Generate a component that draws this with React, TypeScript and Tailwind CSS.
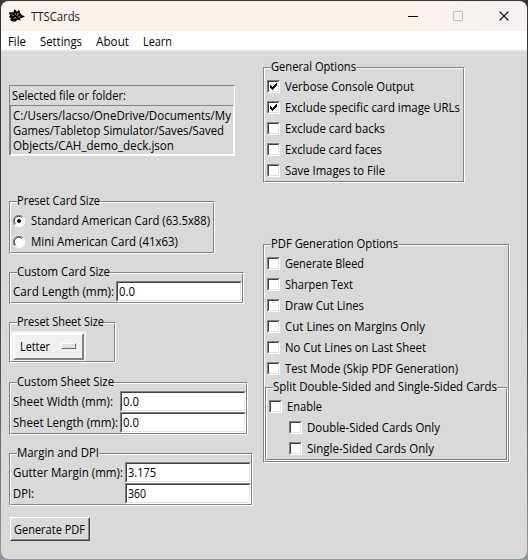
import { useLayoutEffect, useRef, type ReactNode } from 'react';

/** Single line of text condensed or widened to an exact pixel width. */
function Fit({ w, children, className = '' }: { w: number; children: string; className?: string }) {
  const outer = useRef<HTMLSpanElement>(null);
  const inner = useRef<HTMLSpanElement>(null);
  useLayoutEffect(() => {
    if (!outer.current || !inner.current) return;
    outer.current.style.width = w + 'px';
    inner.current.style.transform = 'none';
    inner.current.style.transform = `scaleX(${w / inner.current.getBoundingClientRect().width})`;
  }, [w, children]);
  return (
    <span ref={outer} className={`block shrink-0 ${className}`}>
      <span ref={inner} className="inline-block origin-left whitespace-nowrap align-top">
        {children}
      </span>
    </span>
  );
}

function Group({ title, tw, className, children }: { title: string; tw: number; className: string; children: ReactNode }) {
  return (
    <fieldset className={`relative shrink-0 border border-t-[#828282] border-l-[#828282] border-r-white border-b-white ${className}`}>
      <div className="h-full border border-t-white border-l-white border-r-[#828282] border-b-[#828282] pt-[7px]">{children}</div>
      <div className="absolute -top-[9px] left-[7px] bg-[#d9d9d9] leading-4">
        <Fit w={tw}>{title}</Fit>
      </div>
    </fieldset>
  );
}

function Check({ label, w, on = false, className = 'pl-[2px]' }: { label: string; w: number; on?: boolean; className?: string }) {
  return (
    <label className={`flex h-[21px] items-center ${className}`}>
      <span className="block size-[13px] shrink-0 border border-t-[#828282] border-l-[#828282] border-r-white border-b-white">
        <span className="block size-[11px] border border-t-[#404040] border-l-[#404040] border-r-[#e0e0e0] border-b-[#e0e0e0] bg-white">
          {on && (
            <svg viewBox="0 0 9 9" className="block size-[9px]" shapeRendering="crispEdges">
              <path d="M1 3h1v3H1zM2 4h1v3H2zM3 5h1v3H3zM4 4h1v3H4zM5 3h1v3H5zM6 2h1v3H6zM7 1h1v3H7z" fill="#000" />
            </svg>
          )}
        </span>
      </span>
      <Fit w={w} className="ml-[5px]">{label}</Fit>
    </label>
  );
}

function Radio({ label, w, on = false }: { label: string; w: number; on?: boolean }) {
  return (
    <label className="flex h-[21px] items-center pl-[2px]">
      <svg viewBox="0 0 12 12" className="block size-3 shrink-0">
        <circle cx="6" cy="6" r="5" fill="#fff" />
        <path d="M1.9 10.1A5.5 5.5 0 0 1 10.1 1.9" fill="none" stroke="#828282" />
        <path d="M10.1 1.9A5.5 5.5 0 0 1 1.9 10.1" fill="none" stroke="#fff" />
        <path d="M2.6 9A4.5 4.5 0 0 1 9 2.6" fill="none" stroke="#404040" />
        {on && <circle cx="6" cy="6" r="2" fill="#000" />}
      </svg>
      <Fit w={w} className="ml-[6px]">{label}</Fit>
    </label>
  );
}

function Entry({ label, lw, gap, value, vw }: { label: string; lw: number; gap: string; value: string; vw: number }) {
  return (
    <div className="flex h-[21px] items-center pl-[2px]">
      <Fit w={lw}>{label}</Fit>
      <div className={`h-[21px] w-[126px] border border-t-[#828282] border-l-[#828282] border-r-white border-b-white ${gap}`}>
        <div className="flex h-full items-center border border-t-[#404040] border-l-[#404040] border-r-[#e3e3e3] border-b-[#e3e3e3] bg-white pl-px">
          <Fit w={vw}>{value}</Fit>
        </div>
      </div>
    </div>
  );
}

export default function App() {
  return (
    <div className="h-[560px] w-[528px] overflow-hidden bg-gradient-to-b from-[#37363b] from-50% to-[#8f979f] px-px pt-px font-['Open_Sans','Noto_Sans',sans-serif] text-[12px] leading-[15px] text-black">
      <div className="flex h-[558px] w-[526px] flex-col overflow-hidden rounded-[8px] bg-[#d9d9d9]">
        <header className="flex h-[30px] shrink-0 items-center bg-gradient-to-r from-[#f9f1ec] from-80% to-[#f4f1f1] pl-[8px]">
          <svg viewBox="0 0 16 14" className="h-[14px] w-4" >
            <path d="M5.5 0.2L7.2 1.6 8 3 9.8 1 11 2.2 10.6 4 12 4.6 12.6 6 16 7.2 13 9 10.8 9.6 11.6 11.4 8.4 10.8 6.6 12.6 3 12.4 1.2 10.4 2.2 9.4 0 8 1 6.6 0 3.4 2.6 3.2 4.4 3.6z" fill="#000" />
            <path d="M2.4 5.2l2.4 1.6M6.2 4.2l.6 1.8M9.4 4l-1.6 2.8M4.6 9.4l2.4-.8M9.2 8.2l2-.6" stroke="#f9f1ec" strokeWidth="0.7" fill="none" />
          </svg>
          <Fit w={49} className="ml-[6px] text-[#1c1a1a]">TTSCards</Fit>
          <svg viewBox="0 0 102 11" className="ml-[328px] h-[11px] w-[102px]" fill="none">
            <path d="M0 5.5h10" stroke="#000" />
            <rect x="45.5" y="0.5" width="9" height="9" rx="0.5" stroke="#c6c0bd" />
            <path d="M91.5 0.5l9 9M100.5 0.5l-9 9" stroke="#111" strokeWidth="1.1" />
          </svg>
        </header>
        <nav className="flex h-[20px] shrink-0 items-center gap-[14px] border-b-2 border-[#f0f0f0] bg-white pt-[2px] pl-[7px]">
          <Fit w={18}>File</Fit>
          <Fit w={42}>Settings</Fit>
          <Fit w={33}>About</Fit>
          <Fit w={29}>Learn</Fit>
        </nav>
        <main className="flex flex-1">
          <section className="flex w-[254px] shrink-0 flex-col items-start pt-[34px] pl-[8px]">
            <div className="h-[71px] w-[226px] border border-t-[#828282] border-l-[#828282] border-r-white border-b-white">
              <div className="flex h-[19px] items-center pl-[2px]">
                <Fit w={114}>Selected file or folder:</Fit>
              </div>
              <div className="h-[50px] border border-t-[#828282] border-l-[#828282] border-r-white border-b-white pt-[2px] pl-[2px]">
                <Fit w={218}>C:/Users/lacso/OneDrive/Documents/My</Fit>
                <Fit w={211}>Games/Tabletop Simulator/Saves/Saved</Fit>
                <Fit w={161}>Objects/CAH_demo_deck.json</Fit>
              </div>
            </div>
            <Group title="Preset Card Size" tw={83} className="mt-[45px] h-[53px] w-[206px]">
              <Radio on label="Standard American Card (63.5x88)" w={179} />
              <Radio label="Mini American Card (41x63)" w={147} />
            </Group>
            <Group title="Custom Card Size" tw={93} className="mt-[18px] h-[32px] w-[234px]">
              <Entry label="Card Length (mm):" lw={101} gap="ml-[2px]" value="0.0" vw={16} />
            </Group>
            <Group title="Preset Sheet Size" tw={87} className="mt-[18px] h-[41px] w-[107px]">
              <div className="h-[30px] w-[75px] bg-[#f0f0f0] p-[2px] pb-0">
                <div className="flex h-[27px] w-[71px] items-center border-2 border-t-white border-l-white border-r-[#828282] border-b-[#828282] pl-[5px]">
                  <Fit w={30}>Letter</Fit>
                  <div className="-mt-[2px] ml-[11px] h-[6px] w-[15px] border border-t-white border-l-white border-r-[#696969] border-b-[#696969] bg-[#e3e3e3]" />
                </div>
              </div>
            </Group>
            <Group title="Custom Sheet Size" tw={97} className="mt-[19px] h-[53px] w-[239px]">
              <Entry label="Sheet Width (mm):" lw={100} gap="ml-[7px]" value="0.0" vw={16} />
              <Entry label="Sheet Length (mm):" lw={105} gap="ml-[2px]" value="0.0" vw={16} />
            </Group>
            <Group title="Margin and DPI" tw={82} className="mt-[18px] h-[53px] w-[244px]">
              <Entry label="Gutter Margin (mm):" lw={110} gap="ml-[2px]" value="3.175" vw={28} />
              <Entry label="DPI:" lw={21} gap="ml-[91px]" value="360" vw={18} />
            </Group>
            <button className="mt-[11px] ml-px h-[24px] w-[80px] border border-t-white border-l-white border-r-[#404040] border-b-[#404040]">
              <span className="flex h-full items-center border border-t-[#e3e3e3] border-l-[#e3e3e3] border-r-[#828282] border-b-[#828282] pl-[2px]">
                <Fit w={71}>Generate PDF</Fit>
              </span>
            </button>
          </section>
          <section className="flex flex-col items-start pt-[16px] pl-[8px]">
            <Group title="General Options" tw={85} className="h-[116px] w-[202px]">
              <Check on label="Verbose Console Output" w={129} />
              <Check on label="Exclude specific card image URLs" w={175} />
              <Check label="Exclude card backs" w={100} />
              <Check label="Exclude card faces" w={97} />
              <Check label="Save Images to File" w={100} />
            </Group>
            <Group title="PDF Generation Options" tw={127} className="mt-[61px] h-[219px] w-[247px]">
              <Check label="Generate Bleed" w={79} />
              <Check label="Sharpen Text" w={68} />
              <Check label="Draw Cut Lines" w={79} />
              <Check label="Cut Lines on Margins Only" w={140} />
              <Check label="No Cut Lines on Last Sheet" w={141} />
              <Check label="Test Mode (Skip PDF Generation)" w={173} />
              <Group title="Split Double-Sided and Single-Sided Cards" tw={224} className="mt-[8px] h-[74px] w-[243px]">
                <Check label="Enable" w={35} />
                <Check label="Double-Sided Cards Only" w={133} className="pl-[22px]" />
                <Check label="Single-Sided Cards Only" w={127} className="pl-[22px]" />
              </Group>
            </Group>
          </section>
        </main>
      </div>
    </div>
  );
}
